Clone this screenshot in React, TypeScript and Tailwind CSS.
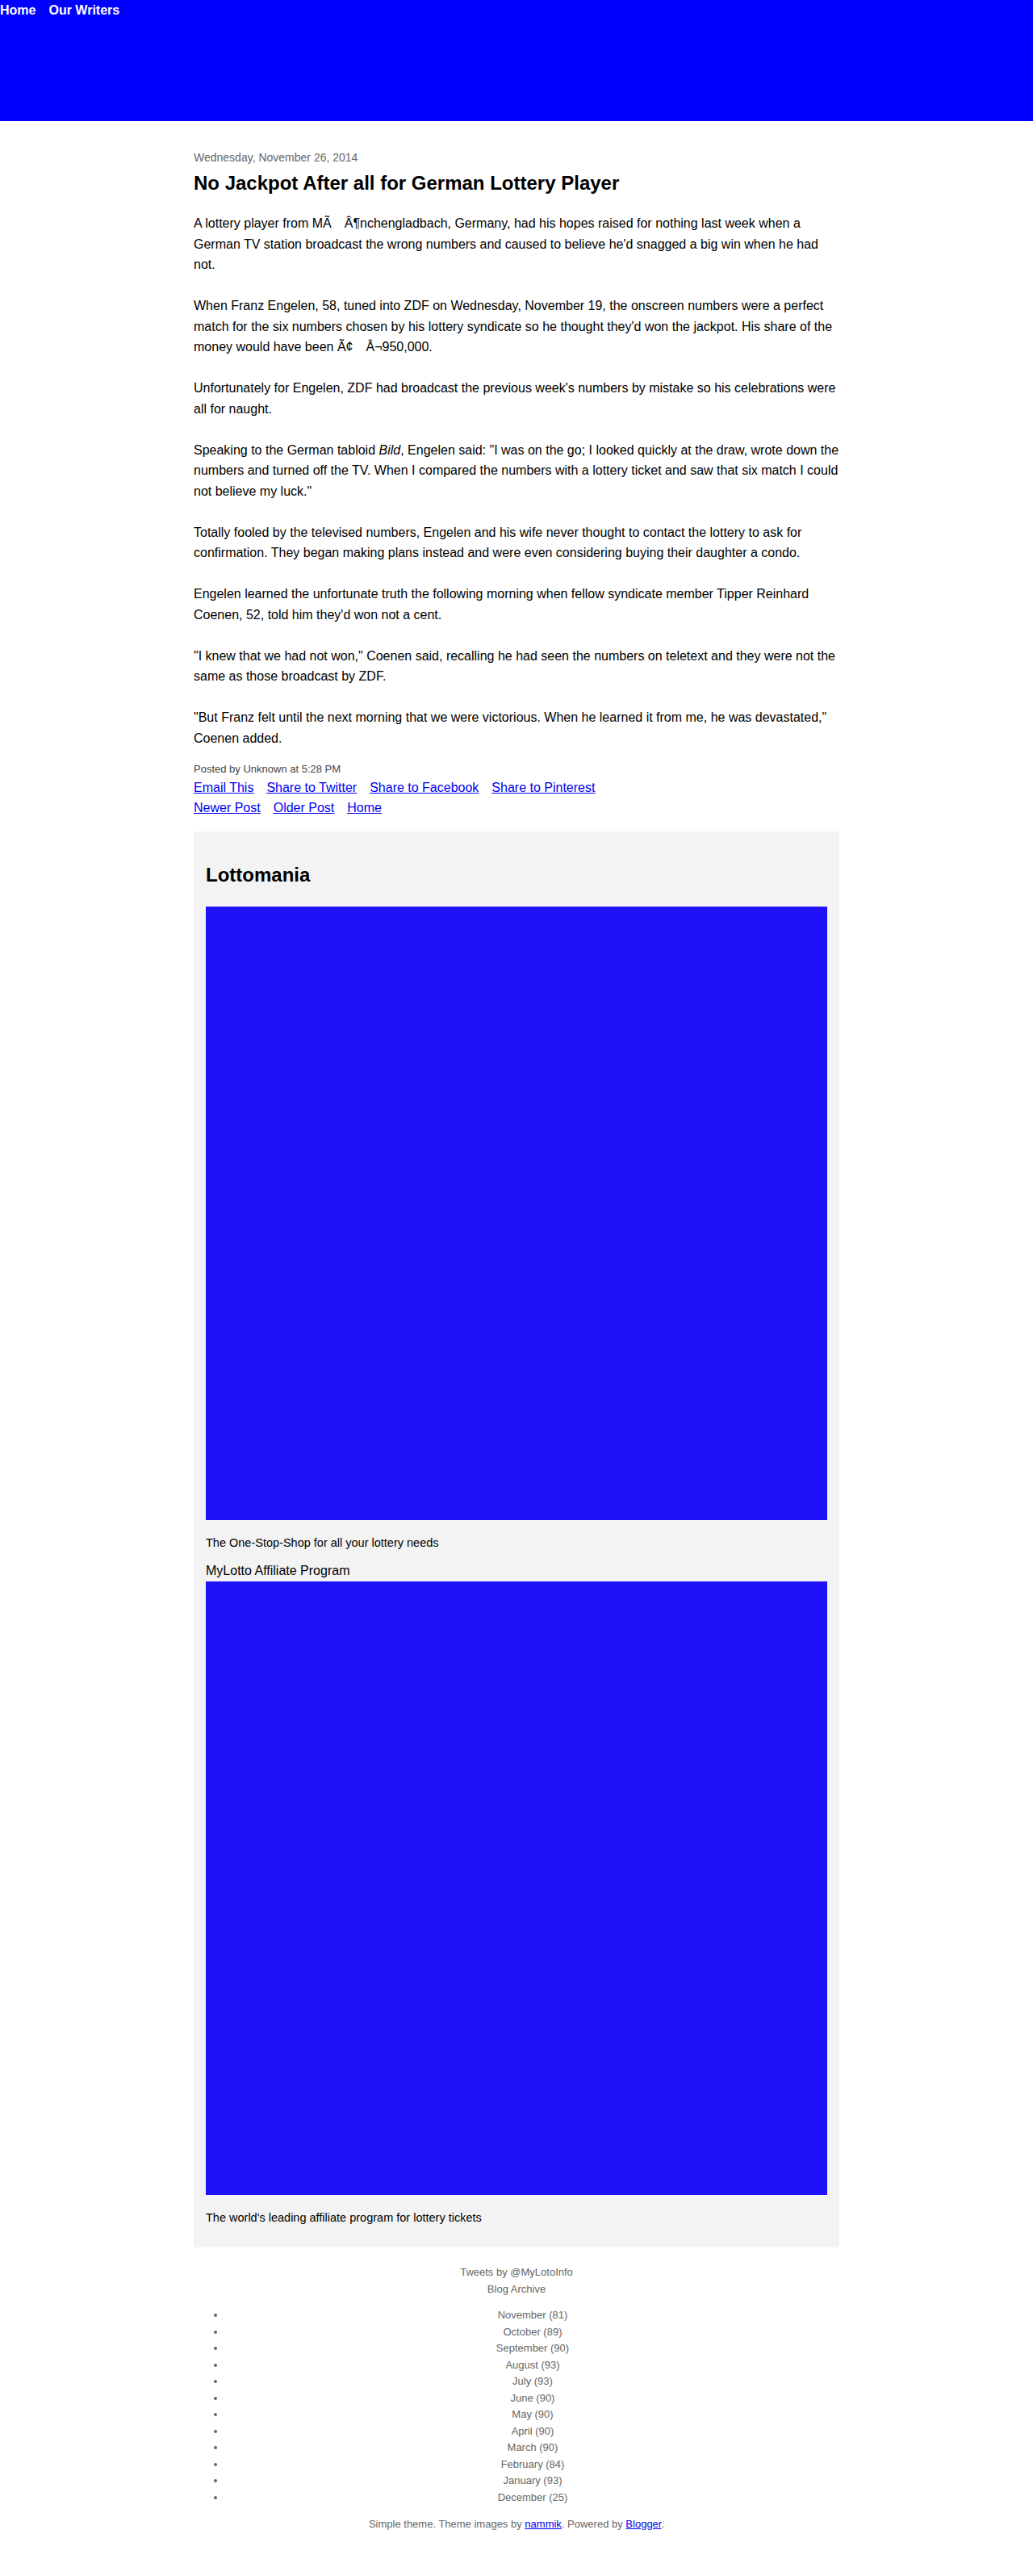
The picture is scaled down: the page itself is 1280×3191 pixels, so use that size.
import React from "react";

const archive = [
  "November (81)",
  "October (89)",
  "September (90)",
  "August (93)",
  "July (93)",
  "June (90)",
  "May (90)",
  "April (90)",
  "March (90)",
  "February (84)",
  "January (93)",
  "December (25)",
];

export default function App() {
  return (
    <div className="min-h-[3191px] bg-white font-['Liberation_Sans',Arial,sans-serif] text-black">
      {/* Header */}
      <header className="h-[150px] bg-[#0000ff]">
        <nav className="flex gap-4 text-[16px] font-bold leading-[25px] text-white">
          <a href="#">Home</a>
          <a href="#">Our Writers</a>
        </nav>
      </header>

      <main className="mx-auto w-[800px] pt-[35px]">
        <div className="text-[14px] leading-[20px] text-[#666]">
          Wednesday, November 26, 2014
        </div>
        <h1 className="mt-[7px] text-[24px] font-bold leading-[30px]">
          No Jackpot After all for German Lottery Player
        </h1>

        {/* Post body */}
        <div className="mt-[22px] text-[16px] leading-[25.5px]">
          A lottery player from MÃ{"\u2003"}Â¶nchengladbach, Germany, had his hopes raised for
          nothing last week when a German TV station broadcast the wrong numbers and caused to
          believe he'd snagged a big win when he had not.
          <br />
          <br />
          When Franz Engelen, 58, tuned into ZDF on Wednesday, November 19, the onscreen numbers
          were a perfect match for the six numbers chosen by his lottery syndicate so he thought
          they'd won the jackpot. His share of the money would have been Ã¢{"\u2003"}Â¬950,000.
          <br />
          <br />
          Unfortunately for Engelen, ZDF had broadcast the previous week's numbers by mistake so
          his celebrations were all for naught.
          <br />
          <br />
          Speaking to the German tabloid <i>Bild</i>, Engelen said: "I was on the go; I looked
          quickly at the draw, wrote down the numbers and turned off the TV. When I compared the
          numbers with a lottery ticket and saw that six match I could not believe my luck."
          <br />
          <br />
          Totally fooled by the televised numbers, Engelen and his wife never thought to contact
          the lottery to ask for confirmation. They began making plans instead and were even
          considering buying their daughter a condo.
          <br />
          <br />
          Engelen learned the unfortunate truth the following morning when fellow syndicate
          member Tipper Reinhard Coenen, 52, told him they'd won not a cent.
          <br />
          <br />
          "I knew that we had not won," Coenen said, recalling he had seen the numbers on
          teletext and they were not the same as those broadcast by ZDF.
          <br />
          <br />
          "But Franz felt until the next morning that we were victorious. When he learned it from
          me, he was devastated," Coenen added.
        </div>

        <div className="mt-[16px] text-[13px] leading-[20px] text-[#444]">
          Posted by Unknown at 5:28 PM
        </div>
        <div className="flex gap-4 text-[16px] leading-[25px] text-[#0000ee] underline">
          <a href="#">Email This</a>
          <a href="#">Share to Twitter</a>
          <a href="#">Share to Facebook</a>
          <a href="#">Share to Pinterest</a>
        </div>
        <div className="flex gap-4 text-[16px] leading-[25px] text-[#0000ee] underline">
          <a href="#">Newer Post</a>
          <a href="#">Older Post</a>
          <a href="#">Home</a>
        </div>

        {/* Sidebar widgets */}
        <aside className="mt-[17px] bg-[#f3f3f3] px-[15px] pt-[39px] pb-[27px]">
          <h2 className="text-[24px] font-bold leading-[30px]">Lottomania</h2>
          <div className="mt-[24px] h-[760px] bg-[#1e10f7]" />
          <p className="mt-[18px] text-[14.5px] leading-[20px]">
            The One-Stop-Shop for all your lottery needs
          </p>
          <h3 className="mt-[14px] text-[16px] leading-[22px]">MyLotto Affiliate Program</h3>
          <div className="mt-[2px] h-[760px] bg-[#1e10f7]" />
          <p className="mt-[18px] text-[14.5px] leading-[20px]">
            The world's leading affiliate program for lottery tickets
          </p>
        </aside>

        <footer className="mt-[20px] text-center text-[13px] text-[#666]">
          <div className="leading-[21px]">Tweets by @MyLotoInfo</div>
          <div className="leading-[21px]">Blog Archive</div>
          <ul className="mt-[12px] list-disc pl-10 leading-[20.5px]">
            {archive.map((m) => (
              <li key={m}>{m}</li>
            ))}
          </ul>
          <p className="mt-[13px] leading-[20px]">
            Simple theme. Theme images by{" "}
            <a href="#" className="text-[#0000ee] underline">
              nammik
            </a>
            . Powered by{" "}
            <a href="#" className="text-[#0000ee] underline">
              Blogger
            </a>
            .
          </p>
        </footer>
      </main>
    </div>
  );
}
